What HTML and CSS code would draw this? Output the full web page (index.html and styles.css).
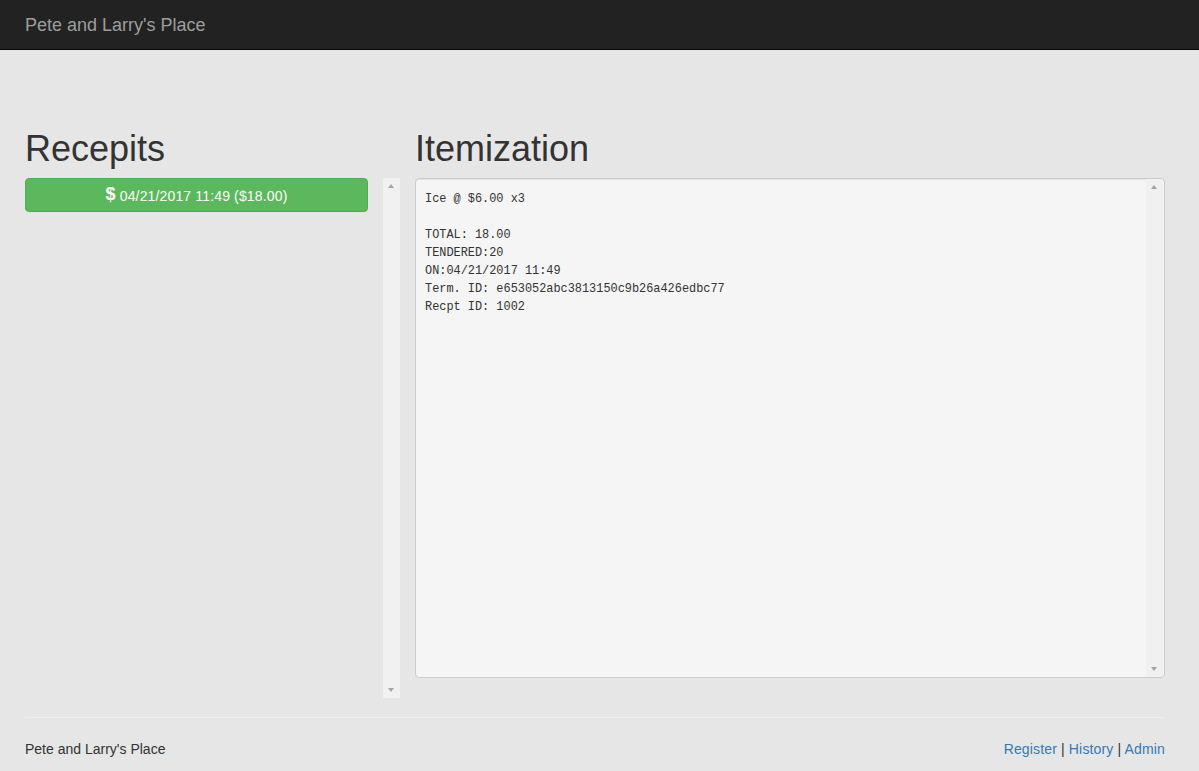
FILE: index.html
```html
<!DOCTYPE html>
<html>
<head>
<meta charset="utf-8">
<title>Pete and Larry's Place</title>
<link rel="stylesheet" href="styles.css">
</head>
<body>
<nav class="navbar">
  <span class="brand">Pete and Larry's Place</span>
</nav>
<main class="main">
  <div class="row">
    <section class="col-left">
      <h1 class="title">Recepits</h1>
      <div class="list-wrap">
        <div class="list">
          <button class="receipt-btn"><span class="usd">$</span> 04/21/2017 11:49 ($18.00)</button>
        </div>
        <div class="scrollbar">
          <span class="arrow-up"></span>
          <span class="arrow-down"></span>
        </div>
      </div>
    </section>
    <section class="col-right">
      <h1 class="title">Itemization</h1>
      <div class="textarea">
        <pre class="receipt-text">Ice @ $6.00 x3

TOTAL: 18.00
TENDERED:20
ON:04/21/2017 11:49
Term. ID: e653052abc3813150c9b26a426edbc77
Recpt ID: 1002</pre>
        <div class="scrollbar inner">
          <span class="arrow-up"></span>
          <span class="arrow-down"></span>
        </div>
      </div>
    </section>
  </div>
  <hr class="rule">
  <footer class="footer">
    <span>Pete and Larry's Place</span>
    <span class="links"><a href="#">Register</a> | <a href="#">History</a> | <a href="#">Admin</a></span>
  </footer>
</main>
</body>
</html>
```
FILE: styles.css
```css
html, body {
  margin: 0;
  padding: 0;
}
body {
  background: #e6e6e6;
  font-family: "Liberation Sans", Arial, sans-serif;
  font-size: 14px;
  line-height: 20px;
  color: #333;
}
.navbar {
  height: 49px;
  background: #222;
  border-bottom: 1px solid #080808;
  display: flex;
  align-items: center;
  padding-left: 25px;
}
.brand {
  font-size: 18px;
  line-height: 20px;
  color: #9d9d9d;
}
.main {
  padding: 79px 34px 0 25px;
}
.row {
  display: flex;
  gap: 15px;
}
.col-left {
  width: 375px;
}
.col-right {
  flex: 1;
}
.title {
  margin: 0 0 9px 0;
  font-size: 36px;
  font-weight: 500;
  line-height: 39.6px;
  color: #333;
}
.list-wrap {
  display: flex;
  gap: 15px;
  height: 520px;
}
.list {
  flex: 1;
}
.receipt-btn {
  display: block;
  width: 100%;
  height: 34px;
  background: #5cb85c;
  border: 1px solid #4cae4c;
  border-radius: 4px;
  color: #fff;
  font-family: "Liberation Sans", Arial, sans-serif;
  font-size: 14px;
  line-height: 20px;
  letter-spacing: 0.15px;
  padding: 6px 12px;
  text-align: center;
  cursor: pointer;
}
.usd {
  font-weight: bold;
  font-size: 18px;
  position: relative;
  top: -1px;
}
.scrollbar {
  width: 17px;
  background: #f1f1f1;
  position: relative;
  flex: none;
}
.arrow-up, .arrow-down {
  position: absolute;
  left: 5px;
  width: 0;
  height: 0;
  border-left: 3.5px solid transparent;
  border-right: 3.5px solid transparent;
}
.arrow-up {
  top: 6px;
  border-bottom: 4px solid #a3a3a3;
}
.arrow-down {
  bottom: 6px;
  border-top: 4px solid #a3a3a3;
}
.textarea {
  height: 498px;
  background: #f5f5f5;
  border: 1px solid #ccc;
  border-radius: 4px;
  box-shadow: inset 0 1px 1px rgba(0,0,0,.075);
  display: flex;
  overflow: hidden;
}
.receipt-text {
  flex: 1;
  margin: 0;
  padding: 11px 9px 9px;
  font-family: "Liberation Mono", "DejaVu Sans Mono", monospace;
  font-size: 11.9px;
  line-height: 18px;
  color: #333;
}
.scrollbar.inner {
  background: #f0f0f0;
  margin-right: 1px;
}
.rule {
  margin: 19px 0 21px 0;
  border: 0;
  border-top: 1px solid #eee;
  height: 0;
}
.footer {
  display: flex;
  justify-content: space-between;
  line-height: 20px;
}
.links {
  letter-spacing: 0.15px;
}
.links a {
  color: #337ab7;
  text-decoration: none;
}
```
